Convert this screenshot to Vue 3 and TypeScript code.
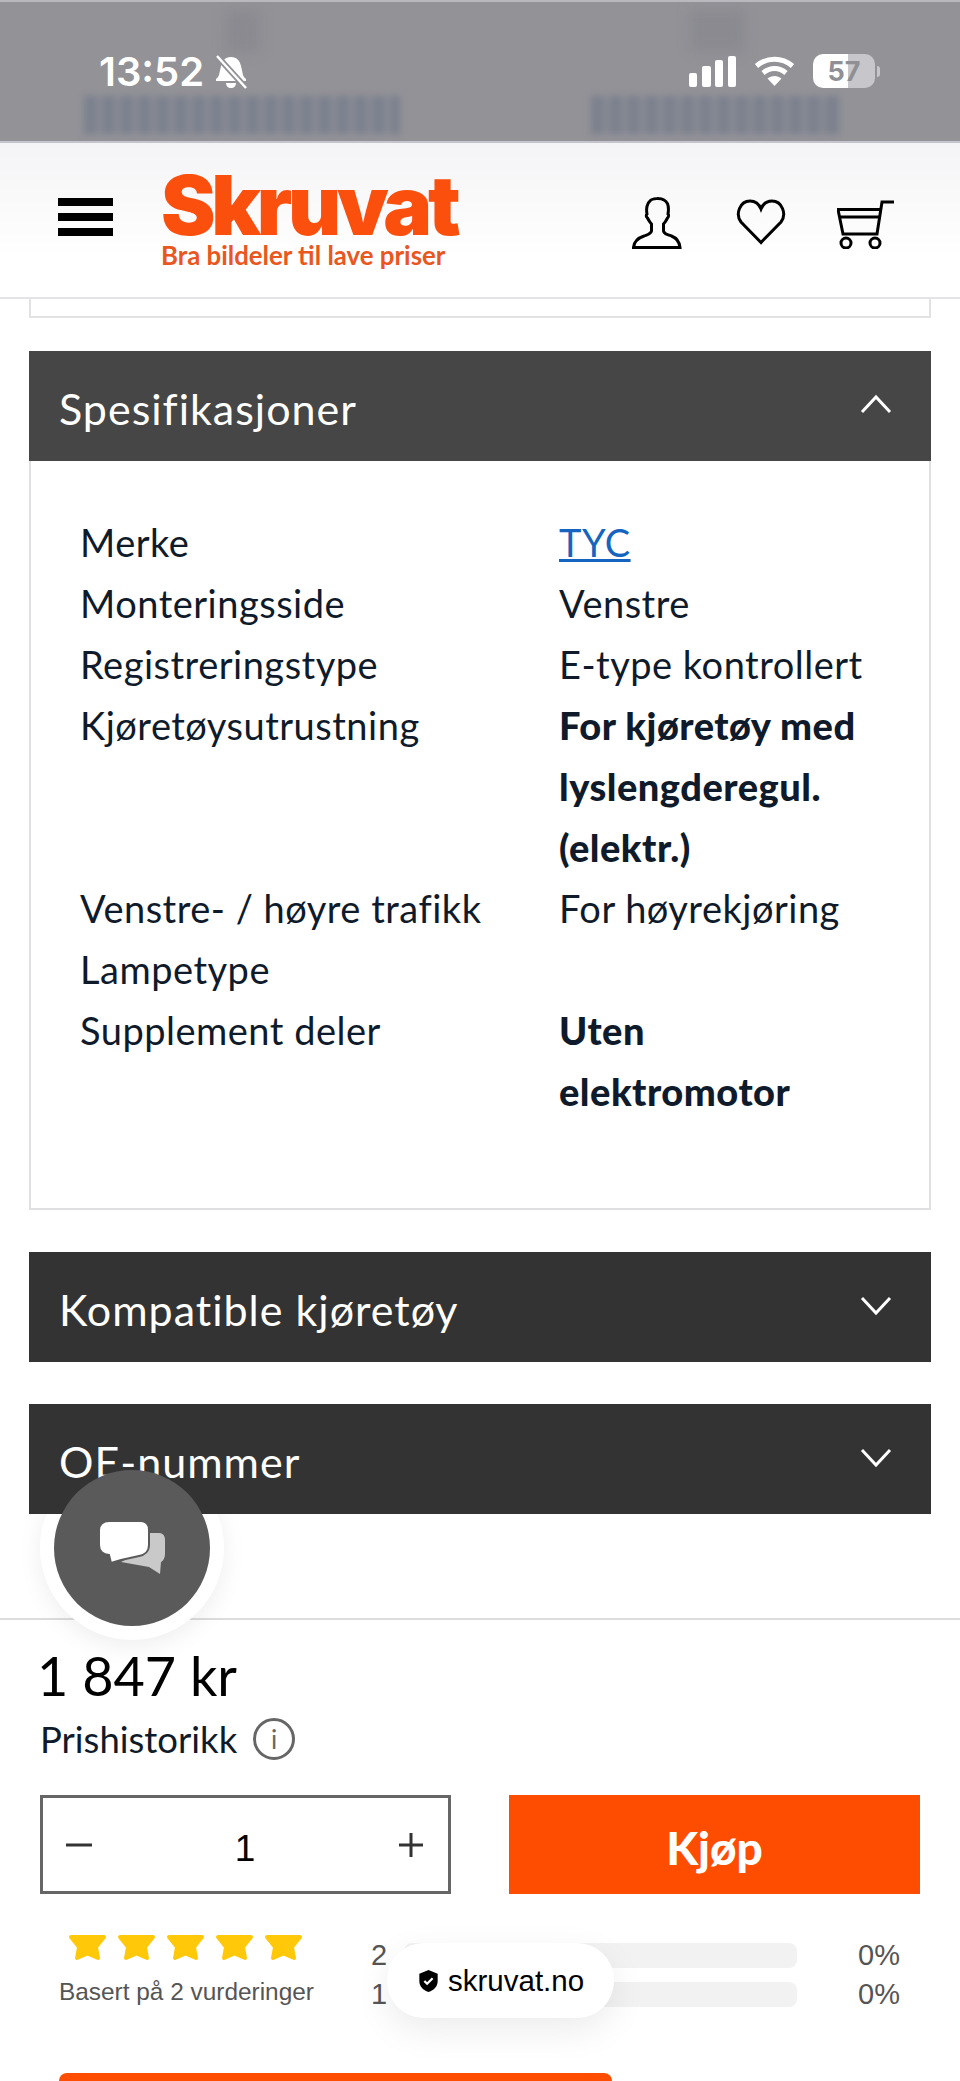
<script setup lang="ts">
type Spec = { label: string; value: string[]; bold?: boolean; link?: boolean };

const specs: Spec[] = [
  { label: "Merke", value: ["TYC"], link: true },
  { label: "Monteringsside", value: ["Venstre"] },
  { label: "Registreringstype", value: ["E-type kontrollert"] },
  { label: "Kjøretøysutrustning", value: ["For kjøretøy med", "lyslengderegul.", "(elektr.)"], bold: true },
  { label: "Venstre- / høyre trafikk", value: ["For høyrekjøring"] },
  { label: "Lampetype", value: [] },
  { label: "Supplement deler", value: ["Uten", "elektromotor"], bold: true },
];

const ratings = [
  { stars: 2, pct: "0%" },
  { stars: 1, pct: "0%" },
];
</script>

<template>
  <div class="page">
    <div class="statusBar">
      <div class="ghost ghostIconA"></div>
      <div class="ghost ghostIconB"></div>
      <div class="ghostRow">
        <div class="ghostText first"></div>
        <div class="ghostText second"></div>
      </div>
      <div class="statusLeft">
        <span class="time">13:52</span>
        <svg class="bell" viewBox="0 0 34 34" fill="#fff">
          <path d="M17 2c-6 0-9 4-10 9l-2 9c-.5 2-2 3-3 4v2h30v-2c-1-1-2.500-2-3-4l-2-9c-1-5-4-9-10-9z" />
          <path d="M12 28h10c0 3-2 5-5 5s-5-2-5-5z" />
          <path d="M3 1 32 33" stroke="#929297" stroke-width="6" />
          <path d="M3 1 32 33" stroke="#fff" stroke-width="2.500" />
        </svg>
      </div>
      <div class="statusRight">
        <svg class="signal" viewBox="0 0 47 31" fill="#fff">
          <rect x="0" y="17" width="8" height="14" rx="2" />
          <rect x="13" y="10" width="9" height="21" rx="2" />
          <rect x="26" y="4" width="8" height="27" rx="2" />
          <rect x="39" y="0" width="8" height="31" rx="2" />
        </svg>
        <svg class="wifi" viewBox="0 0 41 31" fill="none" stroke="#fff" stroke-width="5">
          <path d="M2.500 10C13 1 28 1 38.500 10" />
          <path d="M9 17c7-6 16-6 23 0" />
          <path d="M20.500 30 13.500 22.500c4-3.500 10-3.500 14 0z" fill="#fff" stroke="none" />
        </svg>
        <div class="battery"><span class="batteryText">57</span></div>
        <span class="batteryTip"></span>
      </div>
    </div>

    <header class="siteHeader">
      <div class="burger"><span></span><span></span><span></span></div>
      <div class="logo">
        <div class="logoName">Skruvat</div>
        <div class="logoTag">Bra bildeler til lave priser</div>
      </div>
      <div class="headerIcons">
        <svg class="iconUser" viewBox="0 0 52 52" fill="none" stroke="#000" stroke-width="3">
          <path d="M1.500 50.500C2 45 6 41 12 39c4-1.500 7-2 7.500-5v-7c-2-2-3-4-4-6-1.500-1-1.500-3-.5-4-1-5 0-11 3-13 2-3 11-3 14-1 4 2 5 8 4 14 1 1 .5 3-.5 4-1 2-2 4-4 6v7c.5 3 3.500 3.500 8 5 5 2 8 6 8.500 11.500z" />
        </svg>
        <svg class="iconHeart" viewBox="0 0 50 46" fill="none" stroke="#000" stroke-width="3">
          <path d="M25 43.500 5 23C-1 15 4 2 14 2c5 0 9 3 11 8 2-5 6-8 11-8 10 0 15 13 9 21z" />
        </svg>
        <svg class="iconCart" viewBox="0 0 58 50" fill="none" stroke="#000" stroke-width="3">
          <path d="M57 3H45L40 35H6L1 10.500H44" />
          <path d="M2.500 18H43" />
          <circle cx="9" cy="44" r="5" />
          <circle cx="38" cy="44" r="5" />
        </svg>
      </div>
    </header>

    <main class="content">
      <div class="prevCard"></div>

      <section class="panel">
        <div class="panelHead open">
          <span>Spesifikasjoner</span>
          <svg class="chevron" viewBox="0 0 32 20" fill="none" stroke="#fff" stroke-width="3">
            <path d="M2 18 16 3l14 15" />
          </svg>
        </div>
        <div class="panelBody">
          <div v-for="spec in specs" :key="spec.label" class="specRow">
            <div class="specLabel">{{ spec.label }}</div>
            <div class="specValue" :class="{ bold: spec.bold }">
              <a v-if="spec.link" class="specLink">{{ spec.value[0] }}</a>
              <template v-else>
                <div v-for="line in spec.value" :key="line">{{ line }}</div>
              </template>
            </div>
          </div>
        </div>
      </section>

      <section class="panelHead closed">
        <span>Kompatible kjøretøy</span>
        <svg class="chevron" viewBox="0 0 32 20" fill="none" stroke="#fff" stroke-width="3">
          <path d="M2 2l14 15L30 2" />
        </svg>
      </section>

      <section class="panelHead closed">
        <span>OE-nummer</span>
        <svg class="chevron" viewBox="0 0 32 20" fill="none" stroke="#fff" stroke-width="3">
          <path d="M2 2l14 15L30 2" />
        </svg>
      </section>
    </main>

    <footer class="buyBar">
      <div class="price">1 847 kr</div>
      <div class="priceHistory">
        <span>Prishistorikk</span>
        <span class="infoIcon">i</span>
      </div>
      <div class="buyRow">
        <div class="qty">
          <svg class="qtySign" viewBox="0 0 26 26" stroke="#333" stroke-width="3"><path d="M0 13h26" /></svg>
          <span class="qtyValue">1</span>
          <svg class="qtySign" viewBox="0 0 26 26" stroke="#333" stroke-width="3"><path d="M1 13h24M13 1v24" /></svg>
        </div>
        <button type="button" class="buyBtn">Kjøp</button>
      </div>
      <div class="reviews">
        <div class="reviewScore">
          <div class="stars">
            <svg v-for="n in 5" :key="n" class="star" viewBox="0 0 39 27" fill="#ffc90a" stroke="#ffc90a" stroke-width="4" stroke-linejoin="round">
              <path d="M3 3H36L28 13L30 24L19.500 19.500L9 24L11 13Z" />
            </svg>
          </div>
          <div class="reviewText">Basert på 2 vurderinger</div>
        </div>
        <div class="reviewBars">
          <div v-for="r in ratings" :key="r.stars" class="barRow">
            <span class="barNum">{{ r.stars }}</span>
            <div class="barTrack"></div>
            <span class="barPct">{{ r.pct }}</span>
          </div>
        </div>
      </div>
      <div class="nextBtn"></div>
    </footer>

    <div class="chatHalo"></div>
    <div class="chatBubble">
      <svg viewBox="0 0 66 54" class="chatIcon">
        <path d="M44 12h15c4 0 6 3 6 7v14c0 4-2 7-4 8l-1 12-11-7-28-5 22-12z" fill="#c9c9c9" />
        <path d="M9 0h31c6 0 9 4 9 9v15c0 6-4 10-10 11l-18 4-10 3-2-8c-6 0-10-4-10-10V9c0-5 4-9 10-9z" fill="#fff" stroke="#5a5a5a" stroke-width="2" />
      </svg>
    </div>

    <div class="domainPill">
      <svg class="shield" viewBox="0 0 20 24">
        <path d="M10 0l10 4v8c0 6-4 10-10 12C4 22 0 18 0 12V4z" fill="#000" />
        <path d="M5.500 12l3 3 6-6" fill="none" stroke="#fff" stroke-width="2.500" />
      </svg>
      <span>skruvat.no</span>
    </div>
  </div>
</template>

<style scoped>
.page {
  position: relative;
  width: 960px;
  height: 2081px;
  overflow: hidden;
  background: #fff;
  display: flex;
  flex-direction: column;
  font-family: Lato, "Open Sans", sans-serif;
  color: #0f1a2a;
}

.statusBar {
  position: relative;
  height: 143px;
  flex: none;
  box-sizing: border-box;
  background: #929297;
  border-top: 2px solid #b9b9bd;
  border-bottom: 2px solid #c4c4cc;
  overflow: hidden;
}

.ghost {
  position: absolute;
  top: 8px;
  height: 42px;
  background: #8a8a90;
  filter: blur(6px);
}

.ghostIconA {
  left: 225px;
  width: 35px;
}

.ghostIconB {
  left: 690px;
  width: 55px;
}

.ghostRow {
  position: absolute;
  left: 84px;
  top: 94px;
  display: grid;
  grid-template-columns: 507px auto;
}

/* the page scrolling under the status bar: smeared, unreadable words */
.ghostText {
  height: 38px;
  background: repeating-linear-gradient(90deg, #7c818e 0 13px, #8b8d96 13px 18px);
  filter: blur(3px);
}

.ghostText.first {
  width: 316px;
}

.ghostText.second {
  width: 250px;
}

.statusLeft {
  position: absolute;
  left: 99px;
  top: 50px;
  display: flex;
  align-items: center;
  gap: 10px;
}

.time {
  font-family: Inter, sans-serif;
  font-size: 40px;
  font-weight: 600;
  color: #fff;
  line-height: 40px;
}

.bell {
  width: 34px;
  height: 34px;
}

.statusRight {
  position: absolute;
  left: 689px;
  top: 52px;
  display: flex;
  align-items: center;
}

.signal {
  width: 47px;
  height: 31px;
}

.wifi {
  width: 41px;
  height: 31px;
  margin-left: 18px;
}

.battery {
  width: 62px;
  height: 34px;
  margin-left: 18px;
  border-radius: 10px;
  background: linear-gradient(90deg, #fff 0 57%, #c6c6cb 57% 100%);
  display: flex;
  align-items: center;
  justify-content: center;
}

.batteryText {
  font-family: Inter, sans-serif;
  font-size: 27px;
  font-weight: 700;
  color: #8f8f94;
}

.batteryTip {
  width: 3px;
  height: 11px;
  margin-left: 2px;
  border-radius: 0 3px 3px 0;
  background: #c6c6cb;
}

.siteHeader {
  height: 156px;
  flex: none;
  box-sizing: border-box;
  display: flex;
  align-items: center;
  padding: 0 65px 0 58px;
  background: linear-gradient(180deg, #f4f4f6 0%, #fff 75%);
  border-bottom: 2px solid #e4e4e6;
  position: relative;
}

.burger {
  width: 55px;
  display: flex;
  flex-direction: column;
  gap: 7px;
  margin-top: -6px;
}

.burger span {
  height: 8px;
  background: #000;
}

.logo {
  margin-left: 48px;
  margin-top: -2px;
  width: 320px;
}

.logoName {
  font-family: Inter, sans-serif;
  font-size: 82px;
  font-weight: 900;
  line-height: 70px;
  letter-spacing: -4.300px;
  color: #fb4f0e;
}

.logoTag {
  font-size: 25.800px;
  font-weight: 700;
  line-height: 26px;
  margin-top: 1px;
  color: #e9571e;
}

.headerIcons {
  margin-left: auto;
  display: flex;
  align-items: flex-end;
  margin-top: 5px;
}

.iconUser {
  width: 52px;
  height: 52px;
}

.iconHeart {
  width: 50px;
  height: 46px;
  margin: 0 51px 4px 52px;
}

.iconCart {
  width: 58px;
  height: 50px;
}

.content {
  flex: 1;
  padding: 0 29px;
  min-height: 0;
  position: relative;
  z-index: 2;
}

.prevCard {
  height: 19px;
  box-sizing: border-box;
  border: 2px solid #e2e2e5;
  border-top: 0;
  margin-bottom: 33px;
}

.panelHead {
  height: 110px;
  box-sizing: border-box;
  padding: 0 39px 0 30px;
  display: flex;
  align-items: center;
  justify-content: space-between;
  color: #fff;
  font-size: 43px;
  letter-spacing: 1px;
}

.panelHead.open {
  background: #464646;
}

.panelHead.closed {
  background: #333;
  margin-top: 42px;
}

.panelHead span {
  padding-top: 4px;
}

.chevron {
  width: 32px;
  height: 20px;
}

.open .chevron {
  margin-top: -5px;
}

.closed .chevron {
  margin-top: -3px;
}

.panelBody {
  box-sizing: border-box;
  height: 749px;
  padding: 51px 20px 0 49px;
  border: 2px solid #dfdfe2;
  border-top: 0;
}

.specRow {
  display: flex;
  font-size: 38px;
  letter-spacing: 0.5px;
  line-height: 61px;
}

.specLabel {
  width: 479px;
  flex: none;
}

.specValue.bold {
  font-weight: 900;
}

.specLink {
  color: #1565c0;
  text-decoration: underline;
}

.buyBar {
  height: 463px;
  flex: none;
  box-sizing: border-box;
  border-top: 2px solid #dcdcdc;
  background: #fff;
  padding: 26px 40px 0;
  position: relative;
  color: #000;
}

.price {
  font-size: 54px;
  line-height: 60px;
  margin-left: -3px;
}

.priceHistory {
  display: flex;
  align-items: center;
  gap: 16px;
  margin-top: 11px;
  font-size: 36.500px;
  line-height: 44px;
  color: #0f1a2a;
}

.infoIcon {
  width: 42px;
  height: 42px;
  box-sizing: border-box;
  border: 3px solid #666;
  border-radius: 50%;
  display: flex;
  align-items: center;
  justify-content: center;
  font-size: 26px;
  color: #666;
}

.buyRow {
  display: flex;
  justify-content: space-between;
  margin-top: 34px;
}

.qty {
  width: 411px;
  height: 99px;
  box-sizing: border-box;
  border: 3px solid #666;
  padding: 0 24px 0 23px;
  display: flex;
  align-items: center;
  justify-content: space-between;
}

.qtySign {
  width: 26px;
  height: 26px;
}

.qtyValue {
  font-family: "Liberation Sans", sans-serif;
  font-size: 37px;
  margin-top: 9px;
}

.buyBtn {
  width: 411px;
  height: 99px;
  border: 0;
  padding: 6px 0 0;
  background: #ff4d00;
  color: #fff;
  font-family: Lato, sans-serif;
  font-size: 46px;
  font-weight: 900;
}

.reviews {
  display: flex;
  margin-top: 40px;
  font-family: "Liberation Sans", sans-serif;
  color: #555;
}

.reviewScore {
  width: 331px;
  flex: none;
  padding-left: 19px;
  box-sizing: border-box;
}

.stars {
  display: flex;
  gap: 10px;
  margin-left: 9px;
}

.star {
  width: 39px;
  height: 27px;
}

.reviewText {
  font-size: 24.400px;
  line-height: 28px;
  margin-top: 17px;
  white-space: nowrap;
}

.reviewBars {
  flex: 1;
  padding-top: 9px;
}

.barRow {
  display: flex;
  align-items: center;
  height: 25px;
  font-size: 29px;
  margin-bottom: 14px;
}

.barNum {
  width: 33px;
  flex: none;
}

.barTrack {
  width: 393px;
  height: 25px;
  border-radius: 8px;
  background: #f2f2f2;
  flex: none;
}

.barPct {
  margin-left: 61px;
}

.nextBtn {
  position: absolute;
  left: 59px;
  bottom: -10px;
  width: 553px;
  height: 18px;
  background: #ff4d00;
  border-radius: 8px 8px 0 0;
}

.chatHalo {
  position: absolute;
  left: 40px;
  top: 1456px;
  width: 184px;
  height: 184px;
  border-radius: 50%;
  background: #fff;
  box-shadow: 0 6px 24px rgba(0, 0, 0, 0.07);
  z-index: 1;
}

.chatBubble {
  position: absolute;
  left: 54px;
  top: 1470px;
  width: 156px;
  height: 156px;
  border-radius: 50%;
  background: #5a5a5a;
  z-index: 3;
  display: flex;
  align-items: center;
  justify-content: center;
}

.chatIcon {
  width: 66px;
  height: 54px;
  margin-left: 2px;
}

.domainPill {
  position: absolute;
  left: 387px;
  top: 1943px;
  width: 227px;
  height: 75px;
  border-radius: 37px;
  background: #fff;
  box-shadow: 0 12px 36px rgba(0, 0, 0, 0.08);
  display: flex;
  align-items: center;
  padding-left: 32px;
  box-sizing: border-box;
  gap: 10px;
  font-family: "Liberation Sans", sans-serif;
  font-size: 29.500px;
  color: #000;
  z-index: 4;
}

.shield {
  width: 19px;
  height: 22px;
}
</style>
